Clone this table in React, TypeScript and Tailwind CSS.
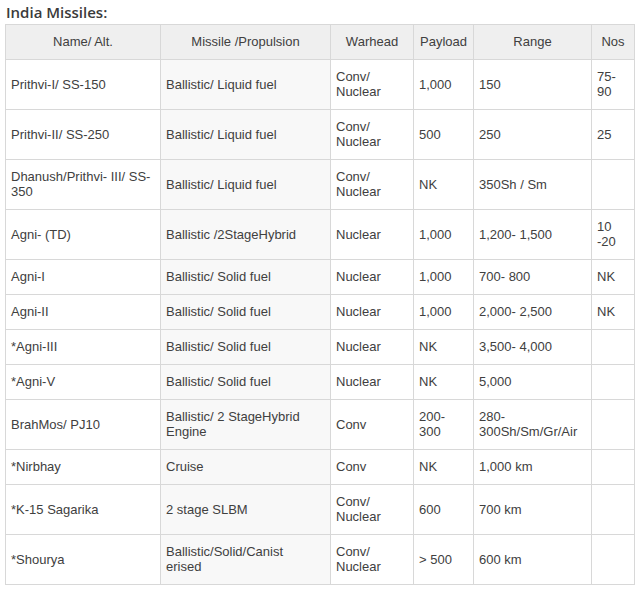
import React from "react";

type Row = { c: React.ReactNode[] };

const rows: Row[] = [
  { c: ["Prithvi-I/ SS-150", "Ballistic/ Liquid fuel", <>Conv/<br />Nuclear</>, "1,000", "150", <>75-<br />90</>] },
  { c: ["Prithvi-II/ SS-250", "Ballistic/ Liquid fuel", <>Conv/<br />Nuclear</>, "500", "250", "25"] },
  { c: [<>Dhanush/Prithvi- III/ SS-<br />350</>, "Ballistic/ Liquid fuel", <>Conv/<br />Nuclear</>, "NK", "350Sh / Sm", ""] },
  { c: ["Agni- (TD)", "Ballistic /2StageHybrid", "Nuclear", "1,000", "1,200- 1,500", <>10<br />-20</>] },
  { c: ["Agni-I", "Ballistic/ Solid fuel", "Nuclear", "1,000", "700- 800", "NK"] },
  { c: ["Agni-II", "Ballistic/ Solid fuel", "Nuclear", "1,000", "2,000- 2,500", "NK"] },
  { c: ["*Agni-III", "Ballistic/ Solid fuel", "Nuclear", "NK", "3,500- 4,000", ""] },
  { c: ["*Agni-V", "Ballistic/ Solid fuel", "Nuclear", "NK", "5,000", ""] },
  { c: ["BrahMos/ PJ10", <>Ballistic/ 2 StageHybrid<br />Engine</>, "Conv", <>200-<br />300</>, <>280-<br />300Sh/Sm/Gr/Air</>, ""] },
  { c: ["*Nirbhay", "Cruise", "Conv", "NK", "1,000 km", ""] },
  { c: ["*K-15 Sagarika", "2 stage SLBM", <>Conv/<br />Nuclear</>, "600", "700 km", ""] },
  { c: ["*Shourya", <>Ballistic/Solid/Canist<br />erised</>, <>Conv/<br />Nuclear</>, "> 500", "600 km", ""] },
];

const widths = ["w-[155px]", "w-[170px]", "w-[83px]", "w-[60px]", "w-[118px]", "w-[43px]"];
const heads = ["Name/ Alt.", "Missile /Propulsion", "Warhead", "Payload", "Range", "Nos"];

export default function App() {
  return (
    <div className="w-[640px] h-[590px] bg-white" style={{ fontFamily: '"Liberation Sans", Arial, sans-serif' }}>
      <div className="pl-[6px] pt-[1px] h-[24px] text-[15px] leading-[22px] font-semibold text-[#3a3a3a]" style={{ fontFamily: '"Open Sans", sans-serif' }}>
        India Missiles:
      </div>
      <table className="ml-[5px] table-fixed border-collapse w-[629px] text-[13px] leading-[15px] text-[#404040]">
        <colgroup>
          {widths.map((w, i) => (
            <col key={i} className={w} />
          ))}
        </colgroup>
        <thead>
          <tr className="bg-[#efefef]">
            {heads.map((h, i) => (
              <th key={i} className="border border-[#d8d8d8] font-normal text-center align-middle px-[5px] pt-[9px] pb-[10px]">
                {h}
              </th>
            ))}
          </tr>
        </thead>
        <tbody>
          {rows.map((r, ri) => (
            <tr key={ri}>
              {r.c.map((cell, ci) => (
                <td
                  key={ci}
                  className={
                    "border border-[#d8d8d8] align-middle text-left px-[5px] pt-[9px] pb-[10px] " +
                    (ci === 1 ? "bg-[#f8f8f8]" : "bg-white")
                  }
                >
                  {cell}
                </td>
              ))}
            </tr>
          ))}
        </tbody>
      </table>
    </div>
  );
}
